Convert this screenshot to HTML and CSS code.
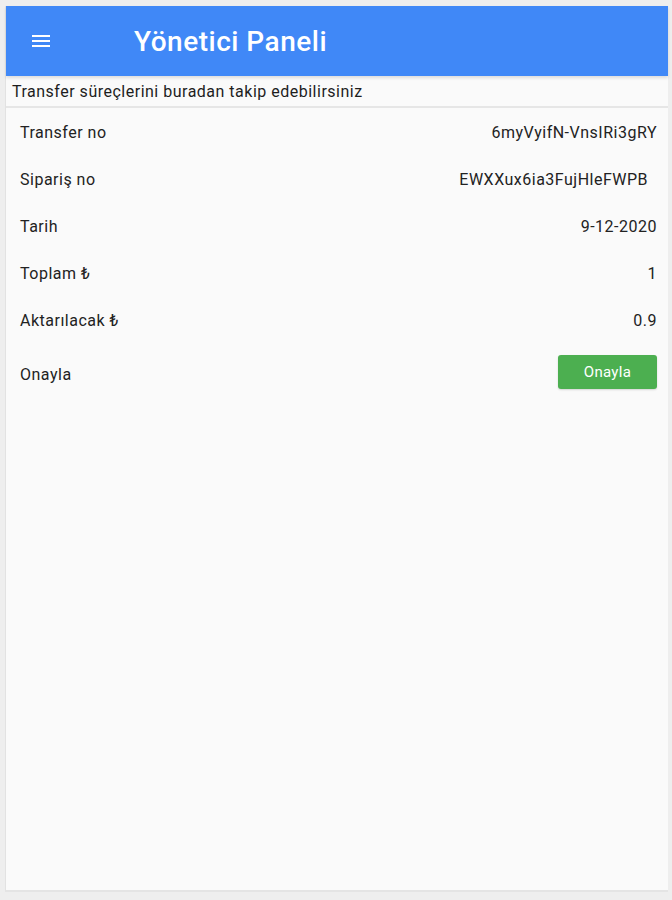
FILE: index.html
```html
<!DOCTYPE html>
<html>
<head>
  <meta charset="UTF-8">
  <title>Yönetici Paneli</title>
  <link rel="stylesheet" href="styles.css">
</head>
<body>
  <div class="container">
    <div class="toolbar">
      <span class="menu-btn">
        <svg width="24" height="24" viewBox="0 0 24 24"><path d="M3 6h18v2H3zM3 11h18v2H3zM3 16h18v2H3z" fill="#fff"/></svg>
      </span>
      <h1>Yönetici Paneli</h1>
    </div>

    <p class="subtitle">Transfer süreçlerini buradan takip edebilirsiniz</p>

    <div class="list">
      <div class="row">
        <span class="label">Transfer no</span>
        <span class="value">6myVyifN-VnsIRi3gRY</span>
      </div>
      <div class="row">
        <span class="label">Sipariş no</span>
        <span class="value">EWXXux6ia3FujHleFWPB&nbsp;&nbsp;</span>
      </div>
      <div class="row">
        <span class="label">Tarih</span>
        <span class="value">9-12-2020</span>
      </div>
      <div class="row">
        <span class="label">Toplam ₺</span>
        <span class="value">1</span>
      </div>
      <div class="row">
        <span class="label">Aktarılacak ₺</span>
        <span class="value">0.9</span>
      </div>
      <div class="row row-action">
        <span class="label">Onayla</span>
        <button class="approve-btn">Onayla</button>
      </div>
    </div>
  </div>
</body>
</html>
```

FILE: styles.css
```css
body {
  font-family: Roboto, "Noto Sans", sans-serif;
  margin: 0;
  padding: 0;
  background-color: #eeeeee;
}

.container {
  margin: 6px 4px 0 5px;
  height: 886px;
  background-color: #fafafa;
  border-left: 1px solid #e2e2e2;
  border-bottom: 2px solid #e4e4e4;
  box-sizing: border-box;
  display: flex;
  flex-direction: column;
}

.toolbar {
  height: 70px;
  background-color: #4088f7;
  display: flex;
  align-items: center;
  padding-left: 23px;
  box-shadow: 0 2px 3px rgba(0,0,0,0.12);
}

.menu-btn {
  display: flex;
  width: 24px;
  height: 24px;
}

.toolbar h1 {
  margin: 0 0 0 81px;
  color: #fff;
  font-size: 28px;
  font-weight: 500;
  letter-spacing: 0.5px;
}

.subtitle {
  margin: 0;
  height: 30px;
  line-height: 31px;
  padding-left: 6px;
  font-size: 16px;
  letter-spacing: 0.5px;
  color: #1e1e1e;
  border-bottom: 2px solid #e6e6e6;
}

.list {
  padding: 1px 11px 0 14px;
}

.row {
  display: flex;
  justify-content: space-between;
  align-items: center;
  height: 47px;
  font-size: 16px;
  letter-spacing: 0.5px;
  color: #222;
}

.row-action {
  height: 60px;
}

.value {
  white-space: pre;
}

.approve-btn {
  width: 99px;
  height: 34px;
  border: none;
  border-radius: 3px;
  background-color: #4caf50;
  color: #fff;
  font-family: Roboto, "Noto Sans", sans-serif;
  font-size: 15px;
  letter-spacing: 0.3px;
  margin-bottom: 4px;
  box-shadow: 0 1px 2px rgba(0,0,0,0.15);
}
```
